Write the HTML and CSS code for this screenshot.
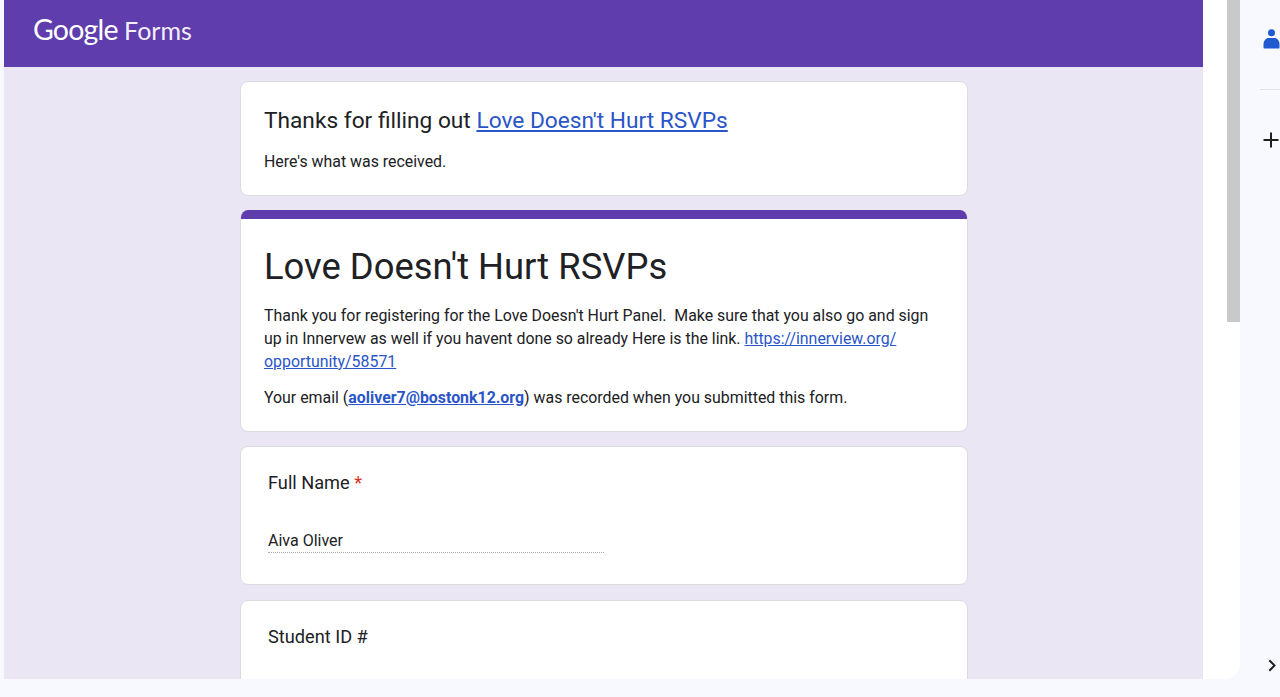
FILE: index.html
```html
<!DOCTYPE html>
<html lang="en">
<head>
  <meta charset="UTF-8" />
  <title>Love Doesn't Hurt RSVPs</title>
  <link rel="stylesheet" href="styles.css">
</head>
<body>

  <div class="window">
    <div class="page">
      <header class="topbar">
        <span class="logo"><span class="logo-google">Google</span> <span class="logo-forms">Forms</span></span>
      </header>

      <main class="content">
        <section class="card thanks">
          <div class="thanks-title">Thanks for filling out <a href="#">Love Doesn't Hurt RSVPs</a></div>
          <div class="thanks-sub">Here's what was received.</div>
        </section>

        <section class="card form-head">
          <div class="accent"></div>
          <div class="form-head-body">
            <h1>Love Doesn't Hurt RSVPs</h1>
            <p class="desc">Thank you for registering for the Love Doesn't Hurt Panel.&nbsp; Make sure that you also go and sign up in Innervew as well if you havent done so already Here is the link. <a href="#">https://innerview.org/</a><br><a href="#">opportunity/58571</a></p>
            <p class="recorded">Your email (<a href="#"><b>aoliver7@bostonk12.org</b></a>) was recorded when you submitted this form.</p>
          </div>
        </section>

        <section class="card question">
          <div class="q-label">Full Name <span class="req">*</span></div>
          <div class="answer">Aiva Oliver</div>
        </section>

        <section class="card question">
          <div class="q-label">Student ID #</div>
        </section>
      </main>
    </div>

    <div class="gutter"></div>
    <div class="scrollbar"><div class="thumb"></div></div>
  </div>

  <aside class="side">
    <svg class="person" width="17" height="20" viewBox="0 0 17 20">
      <circle cx="8.500" cy="3.700" r="3.500" fill="#2159d0"/>
      <path d="M0.500 18.500v-3c0-4 2.500-6.500 5-6.500h6c2.500 0 5 2.500 5 6.500v3c0 .5-.5 1-1 1h-14c-.5 0-1-.5-1-1z" fill="#2159d0"/>
    </svg>
    <div class="side-line"></div>
    <svg class="plus" width="16" height="16" viewBox="0 0 16 16">
      <path d="M8 0.500v15M0.500 8h15" stroke="#1f1f1f" stroke-width="2" fill="none"/>
    </svg>
    <svg class="chevron" width="8" height="13" viewBox="0 0 8 13">
      <path d="M1.300 1.200l5.200 5.300-5.200 5.300" stroke="#1f1f1f" stroke-width="2" fill="none"/>
    </svg>
  </aside>

</body>
</html>
```

FILE: styles.css
```css
html, body {
  height: 100%;
}
body {
  margin: 0;
  height: 697px;
  overflow: hidden;
  display: flex;
  align-items: flex-start;
  background-color: #f8f9fe;
  font-family: Roboto, "Liberation Sans", sans-serif;
  color: #202124;
}
a {
  color: #2a55c8;
  text-decoration: underline;
}
.window {
  margin-left: 4px;
  width: 1236px;
  height: 679px;
  display: flex;
  overflow: hidden;
  background-color: #fff;
  border-bottom-right-radius: 16px;
}
.page {
  width: 1199px;
  flex: none;
  display: flex;
  flex-direction: column;
  background-color: #eae6f4;
}
.topbar {
  height: 67px;
  flex: none;
  padding-left: 29px;
  background-color: #5f3dac;
  color: #fff;
}
.logo {
  display: block;
  margin-top: 11px;
  line-height: 36px;
  font-family: Lato, sans-serif;
  font-size: 25px;
  white-space: nowrap;
}
.logo-google {
  font-size: 28.500px;
  font-weight: 400;
  letter-spacing: -0.8px;
}
.logo-forms {
  font-weight: 400;
  color: #f3effa;
}
.content {
  width: 728px;
  margin-left: 236px;
  padding-top: 14px;
  display: flex;
  flex-direction: column;
  gap: 14px;
}
.card {
  box-sizing: border-box;
  flex: none;
  background-color: #fff;
  border: 1px solid #dadce0;
  border-radius: 8px;
  overflow: hidden;
}
.thanks {
  height: 115px;
  padding: 24px 23px 0;
}
.thanks-title {
  font-size: 22.7px;
  line-height: 30px;
}
.thanks-sub {
  margin-top: 16px;
  font-size: 15.9px;
  line-height: 20px;
}
.form-head {
  height: 222px;
  border-top: none;
}
.accent {
  height: 9px;
  background-color: #5f3dac;
}
.form-head-body {
  padding: 0 23px;
}
h1 {
  margin: 23px 0 0;
  font-size: 36.4px;
  font-weight: 400;
  line-height: 50px;
}
.desc {
  margin: 12px 0 0;
  font-size: 15.9px;
  line-height: 23px;
}
.recorded {
  margin: 13px 0 0;
  font-size: 15.9px;
  line-height: 23px;
}
.question {
  height: 139px;
  padding: 23px 27px 0;
}
.question:last-child {
  height: 120px;
  margin-top: 1px;
}
.q-label {
  font-size: 18.2px;
  line-height: 26px;
}
.req {
  color: #d93025;
}
.answer {
  width: 336px;
  margin-top: 34px;
  padding-bottom: 1px;
  border-bottom: 1px dotted #a5a8ac;
  font-size: 16px;
  line-height: 21px;
}
.gutter {
  width: 24px;
  flex: none;
  background-color: #fff;
}
.scrollbar {
  width: 13px;
  flex: none;
}
.thumb {
  height: 322px;
  background-color: #c9c9c9;
}
.side {
  width: 40px;
  height: 697px;
  flex: none;
  position: relative;
}
.person {
  position: absolute;
  left: 23px;
  top: 29px;
}
.side-line {
  position: absolute;
  left: 20px;
  right: 0;
  top: 89px;
  height: 1px;
  background-color: #e1e3e8;
}
.plus {
  position: absolute;
  left: 23px;
  top: 132px;
}
.chevron {
  position: absolute;
  left: 28px;
  top: 659px;
}
```
